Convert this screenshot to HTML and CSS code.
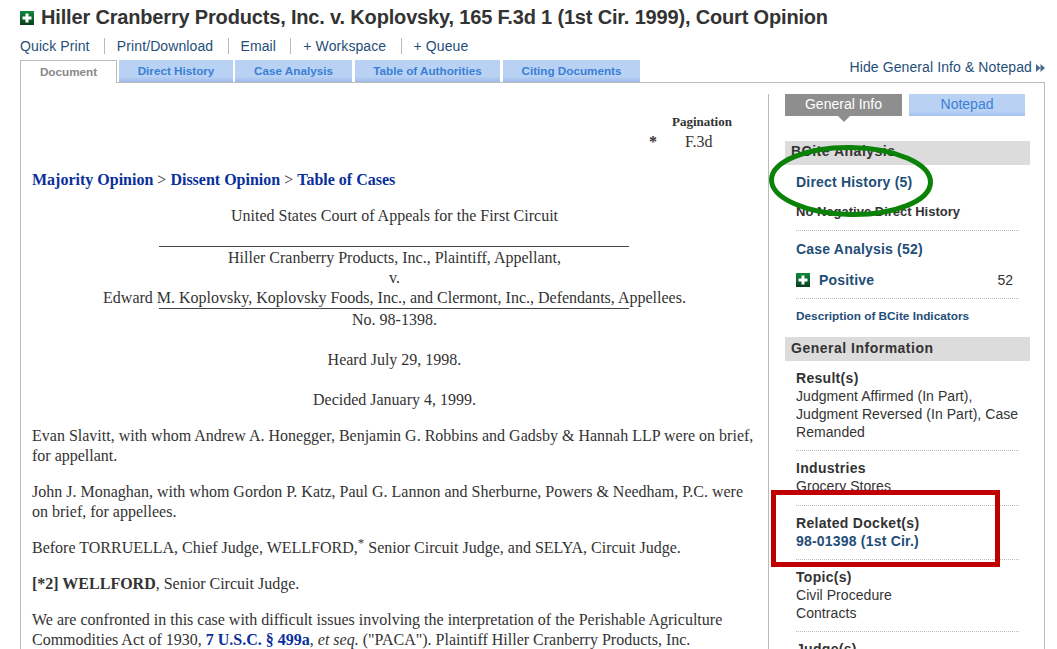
FILE: index.html
```html
<!DOCTYPE html>
<html lang="en">
<head>
    <meta charset="UTF-8">
    <meta name="viewport" content="width=device-width, initial-scale=1.0">
    <title>Hiller Cranberry Products, Inc. v. Koplovsky</title>
    <link rel="stylesheet" href="styles.css">
</head>
<body>
    <div id="page">
        <h1 class="title">
            <svg class="plus plus-title" viewBox="0 0 14 14"><defs><linearGradient id="g1" x1="0" y1="0" x2="0" y2="1"><stop offset="0" stop-color="#0f8a3c"/><stop offset="1" stop-color="#0a3d1f"/></linearGradient></defs><rect width="14" height="14" fill="url(#g1)"/><path d="M5.500 2.500h3v3h3v3h-3v3h-3v-3h-3v-3h3z" fill="#fff"/></svg>
            Hiller Cranberry Products, Inc. v. Koplovsky, 165 F.3d 1 (1st Cir. 1999), Court Opinion
        </h1>

        <div class="actions">
            <a>Quick Print</a>
            <a>Print/Download</a>
            <a>Email</a>
            <a>+ Workspace</a>
            <a>+ Queue</a>
        </div>

        <div class="tabrow">
            <div class="tabs">
                <div class="tab active t-doc">Document</div>
                <div class="tab t-hist">Direct History</div>
                <div class="tab t-case">Case Analysis</div>
                <div class="tab t-auth">Table of Authorities</div>
                <div class="tab t-cite">Citing Documents</div>
            </div>
            <a class="hide-link">Hide General Info &amp; Notepad
                <svg class="arrows" viewBox="0 0 9 8"><path d="M0 0l4.500 4-4.500 4zM4.500 0l4.500 4-4.500 4z" fill="#4a6a8c"/></svg>
            </a>
        </div>

        <div id="panel">
            <!-- Opinion text -->
            <div id="opinion">
                <div class="pagination">
                    <div class="pag-head">Pagination</div>
                    <div class="pag-row"><span class="star">*</span><span>F.3d</span></div>
                </div>

                <p class="jump"><a>Majority Opinion</a> &gt; <a>Dissent Opinion</a> &gt; <a>Table of Cases</a></p>

                <p class="center court">United States Court of Appeals for the First Circuit</p>
                <div class="rule rule-top"></div>
                <div class="center">Hiller Cranberry Products, Inc., Plaintiff, Appellant,</div>
                <div class="center">v.</div>
                <div class="center">Edward M. Koplovsky, Koplovsky Foods, Inc., and Clermont, Inc., Defendants, Appellees.</div>
                <div class="rule rule-over"></div>
                <div class="center">No. 98-1398.</div>
                <p class="center heard">Heard July 29, 1998.</p>
                <p class="center heard decided">Decided January 4, 1999.</p>

                <p>Evan Slavitt, with whom Andrew A. Honegger, Benjamin G. Robbins and Gadsby &amp; Hannah LLP were on brief, for appellant.</p>
                <p>John J. Monaghan, with whom Gordon P. Katz, Paul G. Lannon and Sherburne, Powers &amp; Needham, P.C. were on brief, for appellees.</p>
                <p>Before TORRUELLA, Chief Judge, WELLFORD,<sup>*</sup> Senior Circuit Judge, and SELYA, Circuit Judge.</p>
                <p><b>[*2] WELLFORD</b>, Senior Circuit Judge.</p>
                <p>We are confronted in this case with difficult issues involving the interpretation of the Perishable Agriculture Commodities Act of 1930, <a class="cite">7 U.S.C. § 499a</a>, <i>et seq.</i> ("PACA"). Plaintiff Hiller Cranberry Products, Inc.</p>
            </div>

            <!-- General info column -->
            <div id="side">
                <div class="side-tabs">
                    <div class="side-tab on">General Info</div>
                    <div class="side-tab">Notepad</div>
                </div>

                <h3 class="sec-head bcite-head">BCite Analysis</h3>
                <div class="item first-item">
                    <a class="strong-link">Direct History (5)</a>
                    <div class="no-neg">No Negative Direct History</div>
                </div>
                <div class="item case-item">
                    <a class="strong-link">Case Analysis (52)</a>
                    <div class="pos-row">
                        <svg class="plus" viewBox="0 0 14 14"><rect width="14" height="14" fill="url(#g1)"/><path d="M5.500 2.500h3v3h3v3h-3v3h-3v-3h-3v-3h3z" fill="#fff"/></svg>
                        <a class="strong-link pos-label">Positive</a>
                        <span class="count">52</span>
                    </div>
                </div>
                <a class="desc">Description of BCite Indicators</a>

                <h3 class="sec-head">General Information</h3>
                <div class="item info">
                    <b>Result(s)</b>
                    <div>Judgment Affirmed (In Part),<br>Judgment Reversed (In Part), Case Remanded</div>
                </div>
                <div class="item info info-tall">
                    <b>Industries</b>
                    <div>Grocery Stores</div>
                </div>
                <div class="item info">
                    <b>Related Docket(s)</b>
                    <div><a class="strong-link">98-01398 (1st Cir.)</a></div>
                </div>
                <div class="item info">
                    <b>Topic(s)</b>
                    <div>Civil Procedure<br>Contracts</div>
                </div>
                <div class="item info">
                    <b>Judge(s)</b>
                </div>
            </div>
        </div>

        <!-- Hand drawn markup on top of the page -->
        <svg class="mark-oval" viewBox="0 0 166 74"><ellipse cx="83" cy="37" rx="79.500" ry="33.500" transform="rotate(1 83 37)" fill="none" stroke="#0a8207" stroke-width="5"/></svg>
        <div class="mark-box"></div>
    </div>
</body>
</html>
```

FILE: styles.css
```css
html, body {
    margin: 0;
    height: 100%;
    overflow: hidden;
}

body {
    font-family: "Liberation Sans", Arial, sans-serif;
    background-color: #fff;
    color: #333;
}

#page {
    position: relative;
    height: 649px;
    padding: 6px 12px 0 20px;
    box-sizing: border-box;
    overflow: hidden;
}

a {
    color: #1f4e79;
}

.title {
    display: flex;
    align-items: center;
    gap: 7px;
    margin: 0;
    height: 23px;
    font-size: 20px;
    font-weight: bold;
    letter-spacing: -.17px;
    color: #333;
    white-space: nowrap;
}

.plus {
    width: 14px;
    height: 14px;
    flex: none;
}

.actions {
    display: flex;
    margin-top: 9px;
    height: 16px;
    font-size: 14px;
    line-height: 16px;
    letter-spacing: .1px;
}

.actions a {
    padding: 0 14.300px 0 12px;
    border-left: 1px solid #bbb;
}

.actions a:first-child {
    padding-left: 0;
    border-left: none;
}

.tabrow {
    display: flex;
    justify-content: space-between;
    margin-top: 6px;
    height: 22px;
}

.tabs {
    display: flex;
    gap: 2px;
}

.tab {
    box-sizing: border-box;
    height: 22px;
    font-size: 11.700px;
    font-weight: bold;
    line-height: 21px;
    text-align: center;
    color: #3b7fd4;
    background: linear-gradient(#b9d2f4 75%, #9db9ea);
}

.tab.active {
    height: 23px;
    position: relative;
    z-index: 1;
    line-height: 22px;
    color: #888;
    background: #fff;
    border: 1px solid #bbb;
    border-bottom: none;
}

.t-doc { width: 97px; }
.t-hist { width: 114px; }
.t-case { width: 117px; }
.t-auth { width: 145px; margin-left: 1px; }
.t-cite { width: 137px; margin-left: 1px; }

.hide-link {
    display: flex;
    align-items: center;
    gap: 4px;
    height: 14px;
    font-size: 14px;
    letter-spacing: .1px;
    white-space: nowrap;
}

.arrows {
    width: 9px;
    height: 8px;
    margin-top: 2px;
}

#panel {
    display: flex;
    height: 640px;
    border: 1px solid #bbb;
    border-bottom: none;
    box-sizing: border-box;
}

/* opinion */
#opinion {
    width: 747px;
    flex: none;
    box-sizing: border-box;
    padding: 31px 11px 0 11px;
    font-family: "Liberation Serif", "Times New Roman", serif;
    font-size: 16px;
    line-height: 20px;
    color: #333;
}

#opinion p {
    margin: 0 0 16px;
}

.pagination {
    display: flex;
    flex-direction: column;
    height: 40px;
    margin-bottom: 16px;
    padding-left: 617px;
}

.pag-head {
    font-size: 13px;
    font-weight: bold;
    line-height: 16px;
    padding-left: 23px;
}

.pag-row {
    display: flex;
    gap: 28px;
    line-height: 23px;
}

.star {
    font-weight: bold;
}

.jump a, .cite {
    color: #0a2f9b;
    font-weight: bold;
}

.center {
    text-align: center;
}

#opinion .court {
    margin-bottom: 20px;
}

.rule {
    width: 470px;
    height: 1px;
    margin: 0 auto;
    background: #444;
    position: relative;
    left: -1px;
}

.rule-top {
    margin-bottom: 1px;
}

.rule-over {
    margin-bottom: 1px;
}

#opinion .heard {
    margin-top: 20px;
    margin-bottom: 20px;
}

#opinion .decided {
    margin-bottom: 16px;
}

#opinion sup {
    font-size: 13px;
    line-height: 0;
}

/* side column */
#side {
    flex: 1;
    margin-top: 11px;
    border-left: 1px solid #bbb;
    padding: 0 14px 0 16px;
    font-size: 14px;
    line-height: 18px;
    overflow: hidden;
}

.side-tabs {
    display: flex;
    gap: 7px;
}

.side-tab {
    position: relative;
    width: 116px;
    height: 22px;
    font-size: 14px;
    line-height: 20px;
    text-align: center;
    color: #3b7fd4;
    background: linear-gradient(#b9d2f4 75%, #a5c0ee);
}

.side-tab.on {
    width: 117px;
    color: #fff;
    background: #8e8e8e;
}

.side-tab.on::after {
    content: "";
    position: absolute;
    top: 22px;
    left: 50%;
    margin-left: -6px;
    border-left: 6px solid transparent;
    border-right: 6px solid transparent;
    border-top: 6px solid #8e8e8e;
}

.sec-head {
    margin: 0;
    padding-left: 6px;
    height: 24px;
    font-size: 14px;
    font-weight: bold;
    line-height: 22px;
    color: #333;
    background: #dcdcdc;
    letter-spacing: .5px;
}

.bcite-head {
    margin-top: 25px;
    line-height: 21px;
}

.item {
    margin: 0 11px;
    padding: 8px 0 9px;
    border-bottom: 1px dotted #bbb;
}

.strong-link {
    font-weight: bold;
    letter-spacing: .2px;
}

.first-item {
    padding-top: 8px;
    padding-bottom: 9px;
}

.no-neg {
    margin-top: 12px;
    font-size: 13px;
    font-weight: bold;
}

.case-item {
    padding-top: 9px;
    padding-bottom: 9px;
}

.pos-row {
    display: flex;
    align-items: center;
    margin-top: 13px;
}

.pos-label {
    margin-left: 9px;
}

.count {
    margin-left: auto;
    margin-right: 6px;
}

.desc {
    display: block;
    margin: 8px 11px 12px;
    font-size: 11.800px;
    font-weight: bold;
}

.info {
    letter-spacing: .06px;
}

.info b {
    display: block;
    letter-spacing: .3px;
}

.info-tall {
    padding-bottom: 10px;
}

/* annotations */
.mark-oval {
    position: absolute;
    left: 768px;
    top: 144px;
    width: 166px;
    height: 74px;
}

.mark-box {
    position: absolute;
    left: 771px;
    top: 490px;
    width: 229px;
    height: 77px;
    box-sizing: border-box;
    border: 5px solid #c00000;
}
```
